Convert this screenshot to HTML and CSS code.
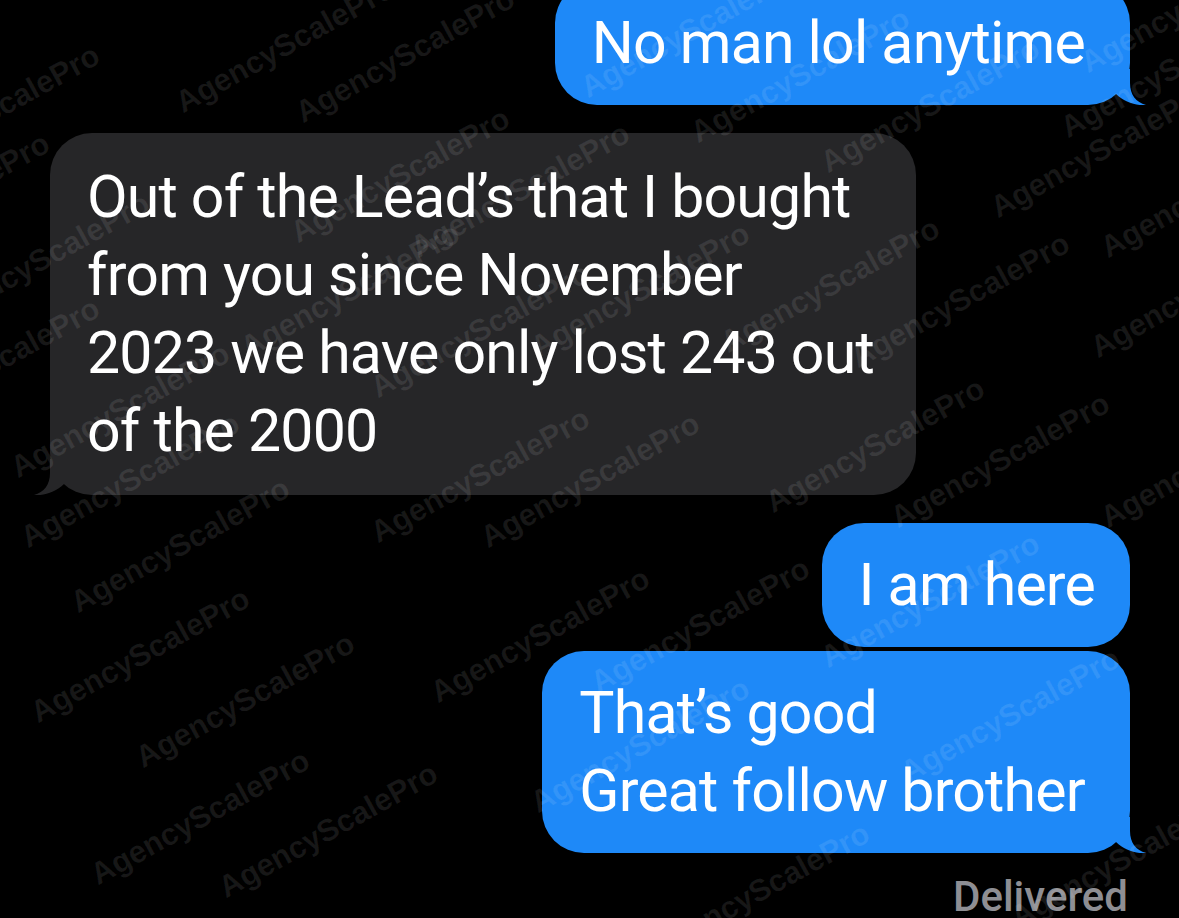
FILE: index.html
```html
<!DOCTYPE html>
<html lang="en">
<head>
<meta charset="utf-8">
<title>Messages</title>
<link rel="stylesheet" href="styles.css">
</head>
<body>
<main class="thread">
  <div class="bubble sent first">No man lol anytime<svg class="tail tail-sent" viewBox="0 0 38 36" width="38" height="36"><path d="M0 0 L22 0 L22 14 C22 26 28 33 38 36 C28 37 16 33 8 25 L0 25 Z"/></svg></div>
  <div class="bubble received">Out of the Lead’s that I bought<br>from you since November<br>2023 we have only lost 243 out<br>of the 2000<svg class="tail tail-received" viewBox="0 0 38 36" width="38" height="36"><path d="M0 0 L22 0 L22 14 C22 26 28 33 38 36 C28 37 16 33 8 25 L0 25 Z"/></svg></div>
  <div class="bubble sent here">I am here</div>
  <div class="bubble sent last">That’s good<br>Great follow brother<svg class="tail tail-sent" viewBox="0 0 38 36" width="38" height="36"><path d="M0 0 L22 0 L22 14 C22 26 28 33 38 36 C28 37 16 33 8 25 L0 25 Z"/></svg></div>
  <div class="status">Delivered</div>
</main>
<div class="watermarks" aria-hidden="true">
  <span class="wm w1">AgencyScalePro</span>
  <span class="wm w2">AgencyScalePro</span>
  <span class="wm w3">AgencyScalePro</span>
  <span class="wm w4">AgencyScalePro</span>
  <span class="wm w5">AgencyScalePro</span>
  <span class="wm w6">AgencyScalePro</span>
  <span class="wm w7">AgencyScalePro</span>
  <span class="wm w8">AgencyScalePro</span>
  <span class="wm w9">AgencyScalePro</span>
  <span class="wm w10">AgencyScalePro</span>
  <span class="wm w11">AgencyScalePro</span>
  <span class="wm w12">AgencyScalePro</span>
  <span class="wm w13">AgencyScalePro</span>
  <span class="wm w14">AgencyScalePro</span>
  <span class="wm w15">AgencyScalePro</span>
  <span class="wm w16">AgencyScalePro</span>
  <span class="wm w17">AgencyScalePro</span>
  <span class="wm w18">AgencyScalePro</span>
  <span class="wm w19">AgencyScalePro</span>
  <span class="wm w20">AgencyScalePro</span>
  <span class="wm w21">AgencyScalePro</span>
  <span class="wm w22">AgencyScalePro</span>
  <span class="wm w23">AgencyScalePro</span>
  <span class="wm w24">AgencyScalePro</span>
  <span class="wm w25">AgencyScalePro</span>
  <span class="wm w26">AgencyScalePro</span>
  <span class="wm w27">AgencyScalePro</span>
  <span class="wm w28">AgencyScalePro</span>
  <span class="wm w29">AgencyScalePro</span>
  <span class="wm w30">AgencyScalePro</span>
  <span class="wm w31">AgencyScalePro</span>
  <span class="wm w32">AgencyScalePro</span>
  <span class="wm w33">AgencyScalePro</span>
  <span class="wm w34">AgencyScalePro</span>
  <span class="wm w35">AgencyScalePro</span>
  <span class="wm w36">AgencyScalePro</span>
  <span class="wm w37">AgencyScalePro</span>
  <span class="wm w38">AgencyScalePro</span>
  <span class="wm w39">AgencyScalePro</span>
  <span class="wm w40">AgencyScalePro</span>
</div>
</body>
</html>
```
FILE: styles.css
```css
* { box-sizing: border-box; }

html, body {
  margin: 0;
  padding: 0;
  background: #000;
}

body {
  width: 1179px;
  height: 918px;
  overflow: hidden;
  position: relative;
  font-family: Roboto, "Liberation Sans", Arial, sans-serif;
}

.thread {
  display: flex;
  flex-direction: column;
  padding: 0 49px 0 50px;
  margin-top: -19px;
}

.bubble {
  position: relative;
  color: #fff;
  font-size: 59px;
  line-height: 78px;
  letter-spacing: -0.8px;
  border-radius: 42px;
  white-space: nowrap;
}

.sent {
  align-self: flex-end;
  background: #1e89f8;
  padding: 23px 45px 23px 37px;
}

.received {
  align-self: flex-start;
  background: #262628;
  padding: 25px 42px 25px 37px;
  margin-top: 28px;
}

.here {
  margin-top: 28px;
  padding-right: 35px;
}

.last { margin-top: 4px; }

.tail {
  position: absolute;
  bottom: 0;
  display: block;
}

.tail-sent {
  right: -16px;
  fill: #1e89f8;
}

.tail-received {
  left: -16px;
  fill: #262628;
  transform: scaleX(-1);
}

.status {
  align-self: flex-end;
  margin-top: 26px;
  margin-right: 2px;
  font-size: 42px;
  line-height: 36px;
  font-weight: 500;
  color: #8e8e93;
}

/* watermark overlay */
.watermarks {
  position: absolute;
  inset: 0;
  pointer-events: none;
  overflow: hidden;
}

.wm {
  position: absolute;
  font-family: "Liberation Sans", Arial, sans-serif;
  font-weight: 700;
  font-size: 31px;
  line-height: 1;
  white-space: nowrap;
  color: rgba(255, 255, 255, 0.09);
  transform: translate(-50%, -50%) rotate(-29deg);
}

.w1 { left: -10px; top: 112px; }
.w2 { left: 285px; top: 45px; }
.w3 { left: 405px; top: 55px; }
.w4 { left: 690px; top: 30px; }
.w5 { left: 800px; top: 75px; }
.w6 { left: 930px; top: 105px; }
.w7 { left: 1100px; top: 150px; }
.w8 { left: 1170px; top: 70px; }
.w9 { left: 1190px; top: 5px; }
.w10 { left: -60px; top: 200px; }
.w11 { left: 40px; top: 260px; }
.w12 { left: 400px; top: 175px; }
.w13 { left: 520px; top: 190px; }
.w14 { left: -10px; top: 365px; }
.w15 { left: 120px; top: 410px; }
.w16 { left: 130px; top: 480px; }
.w17 { left: 350px; top: 290px; }
.w18 { left: 480px; top: 330px; }
.w19 { left: 480px; top: 475px; }
.w20 { left: 590px; top: 480px; }
.w21 { left: 640px; top: 290px; }
.w22 { left: 830px; top: 285px; }
.w23 { left: 875px; top: 445px; }
.w24 { left: 960px; top: 300px; }
.w25 { left: 1000px; top: 460px; }
.w26 { left: 1200px; top: 290px; }
.w27 { left: 1210px; top: 190px; }
.w28 { left: 1210px; top: 460px; }
.w29 { left: 180px; top: 545px; }
.w30 { left: 140px; top: 655px; }
.w31 { left: 245px; top: 700px; }
.w32 { left: 200px; top: 817px; }
.w33 { left: 328px; top: 830px; }
.w34 { left: 540px; top: 635px; }
.w35 { left: 640px; top: 745px; }
.w36 { left: 700px; top: 625px; }
.w37 { left: 760px; top: 890px; }
.w38 { left: 930px; top: 600px; }
.w39 { left: 1010px; top: 715px; }
.w40 { left: 1120px; top: 860px; }
```
